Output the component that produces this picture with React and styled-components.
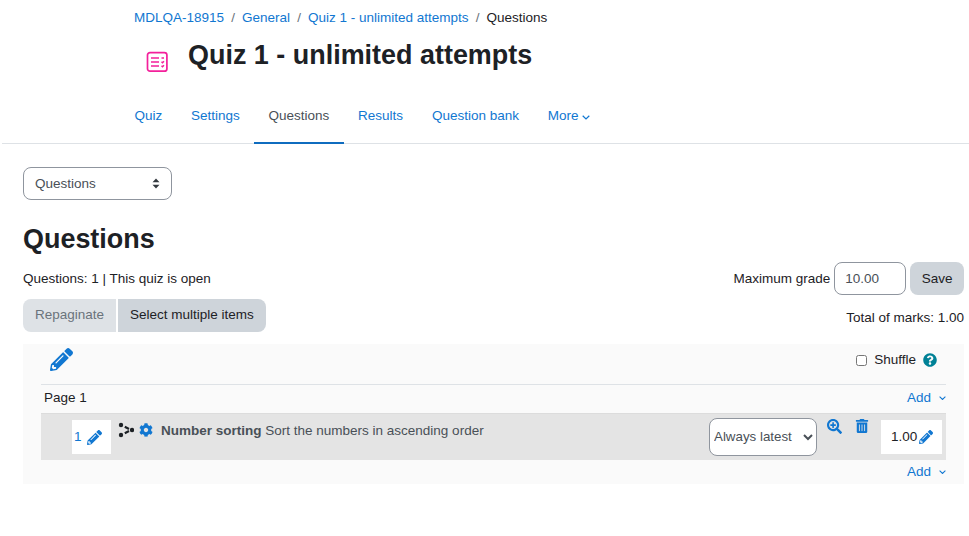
import React from "react";
import styled, { createGlobalStyle } from "styled-components";
import { FaPencilAlt, FaCog, FaTrashAlt, FaSearchPlus, FaQuestionCircle } from "react-icons/fa";

const Global = createGlobalStyle`
  html, body { margin: 0; padding: 0; background: #fff; }
  body { font-family: "Liberation Sans", Arial, sans-serif; font-size: 13.5px; color: #1d2125; line-height: 20px; }
  * { box-sizing: border-box; }
`;
const Page = styled.div`width: 969px; height: 536px; overflow: hidden;`;
const Header = styled.header`padding: 8px 0 0 134px;`;
const Crumbs = styled.nav`display: flex; height: 20px; align-items: center;`;
const Link = styled.a`color: #1177d1; text-decoration: none;`;
const Sep = styled.span`color: #6a737b; padding: 0 7.1px;`;
const Current = styled.span`color: #1d2125;`;
const TitleRow = styled.div`display: flex; align-items: flex-start; height: 52px; margin-top: 7px;`;
const QuizIcon = styled.div`width: 24px; height: 24px; margin: 15px 0 0 11px; color: #f3209b; flex: none; display: flex;`;
const Title = styled.h1`margin: 0 0 0 19px; font-size: 26.95px; line-height: 40px; font-weight: 700; color: #1d2125;`;
const TabBar = styled.div`margin: 16px 0 0 2px; border-bottom: 1px solid #dee2e6; padding-left: 118px; display: flex; height: 41px;`;
const Tab = styled.a`
  padding: 3px 14.4px 0; display: flex; align-items: flex-start; gap: 4px; height: 41px; text-decoration: none;
  color: ${p => p.$active ? "#495057" : "#1177d1"};
  border-bottom: 2px solid ${p => p.$active ? "#0f6cbf" : "transparent"};
`;
const TabChevron = styled.span`display: flex; height: 20px; align-items: center; margin-top: 1px;`;
const Main = styled.main`padding: 23px 5px 0 23px;`;
const FakeSelect = styled.div`
  width: 149px; height: 33px; border: 1px solid #8f959e; border-radius: 8px; display: flex; align-items: center;
  justify-content: space-between; padding: 0 11px; color: #495057;
`;
const H2 = styled.h2`margin: 22px 0 0; font-size: 26.95px; line-height: 34px; font-weight: 700; color: #1d2125;`;
const InfoRow = styled.div`display: flex; justify-content: space-between; align-items: center; height: 33px; margin-top: 6px;`;
const Grade = styled.div`display: flex; align-items: center;`;
const GradeInput = styled.div`
  width: 72px; height: 33px; border: 1px solid #8f959e; border-radius: 8px; margin: 0 4px; padding: 0 10px;
  display: flex; align-items: center; color: #495057;
`;
const Button = styled.button`
  font: inherit; border: 0; height: 33px; background: #ced4da; color: #1d2125; padding: 0 11.5px;
  border-radius: 8px;
`;
const GroupButton = styled(Button)`
  padding: 0 12px 2px;
  border-radius: ${p => p.$first ? "8px 0 0 8px" : "0 8px 8px 0"};
  ${p => p.$first && "background: #dee2e6; color: #6a737b;"}
`;
const ActionRow = styled.div`display: flex; justify-content: space-between; height: 33px; margin-top: 4px;`;
const Group = styled.div`display: flex; gap: 2px;`;
const Total = styled.div`align-self: flex-end; line-height: 20px; position: relative; top: -4px;`;
const Panel = styled.section`background: #fafafa; margin-top: 12px; height: 140px; padding: 0 18px;`;
const PanelTop = styled.div`display: flex; justify-content: space-between; height: 41px; border-bottom: 1px solid #dee2e6; padding: 4px 0 0 9px; color: #1177d1;`;
const Shuffle = styled.label`display: flex; align-items: center; height: 22px; margin: 1px 9px 0 0; color: #1d2125; gap: 8px;`;
const Box = styled.input`margin: 0 -1px 0 0; width: 11px; height: 11px;`;
const HelpIcon = styled.span`color: #008196; display: flex; margin-left: -1px;`;
const PageRow = styled.div`display: flex; justify-content: space-between; height: 28px; align-items: flex-start; padding: 3px 0 0 3px;`;
const AddLink = styled.a`color: #1177d1; display: flex; align-items: center; gap: 8px; text-decoration: none;`;
const QuestionRow = styled.div`
  background: #e4e4e4; border-top: 1px solid #dcdcdc; height: 47px; display: flex; align-items: flex-start; padding: 6px 4px 0 31px;
`;
const Num = styled.div`
  width: 39px; height: 34px; background: #fff; display: flex; align-items: center; gap: 5px; padding-left: 2px; color: #1177d1;
`;
const RandomIcon = styled.svg`margin: 2px 0 0 7px; flex: none; color: #1d2125;`;
const Cog = styled.span`display: flex; color: #1177d1; margin: 3px 0 0 5px;`;
const QName = styled.div`margin: 1px 0 0 8px; color: #495057; flex: 1; line-height: 20px;`;
const Behaviour = styled.select`
  font-family: inherit; font-size: 13.33px; width: 108px; height: 38px; border: 1px solid #8f959e; border-radius: 8px; background: #fff; color: #495057;
  padding: 0 0 2px; margin-top: -2px;
`;
const IconBtn = styled.span`display: flex; color: #1177d1; margin-left: ${p => p.$ml}px; margin-top: -1px;`;
const Mark = styled.div`
  width: 61px; height: 34px; background: #fff; margin-left: 12px; display: flex; align-items: center; padding-left: 10px; gap: 2px; color: #1d2125;
`;
const Foot = styled.div`display: flex; justify-content: flex-end; height: 23px; align-items: flex-start; padding-top: 2px;`;
const Chevron = ({ size = 7 }) => (
  <svg width={size} height={size * 0.625} viewBox="0 0 8 5" fill="none" stroke="currentColor" strokeWidth="1.2"><path d="M.7.8 4 4 7.3.8" /></svg>
);

export default function App() {
  return (
    <Page>
      <Global />
      <Header>
        <Crumbs>
          <Link>MDLQA-18915</Link><Sep>/</Sep>
          <Link>General</Link><Sep>/</Sep>
          <Link>Quiz 1 - unlimited attempts</Link><Sep>/</Sep>
          <Current>Questions</Current>
        </Crumbs>
        <TitleRow>
          <QuizIcon>
            <svg width="24" height="24" viewBox="0 0 24 24" fill="none" stroke="currentColor" strokeWidth="1.7">
              <rect x="2.5" y="2.6" width="19.4" height="18.6" rx="2.5" />
              <path d="M6 8h8M6 12h8M6 16h8" strokeWidth="1.4" />
              <path d="M16.5 8h2.5M16.5 11.8l1 1 1.5-1.5M16.5 15.8l1 1 1.5-1.5" strokeWidth="1.4" />
            </svg>
          </QuizIcon>
          <Title>Quiz 1 - unlimited attempts</Title>
        </TitleRow>
      </Header>
      <TabBar>
        <Tab>Quiz</Tab>
        <Tab>Settings</Tab>
        <Tab $active>Questions</Tab>
        <Tab>Results</Tab>
        <Tab>Question bank</Tab>
        <Tab>More <TabChevron><Chevron size={8} /></TabChevron></Tab>
      </TabBar>
      <Main>
        <FakeSelect>
          Questions
          <svg width="8" height="11" viewBox="0 0 8 11" fill="#343a40"><path d="M4 .5 7.5 4.2H.5zM4 10.5.5 6.8h7z" /></svg>
        </FakeSelect>
        <H2>Questions</H2>
        <InfoRow>
          <span>Questions: 1 | This quiz is open</span>
          <Grade>
            Maximum grade
            <GradeInput>10.00</GradeInput>
            <Button>Save</Button>
          </Grade>
        </InfoRow>
        <ActionRow>
          <Group>
            <GroupButton $first>Repaginate</GroupButton>
            <GroupButton>Select multiple items</GroupButton>
          </Group>
          <Total>Total of marks: 1.00</Total>
        </ActionRow>
        <Panel>
          <PanelTop>
            <FaPencilAlt size={23} />
            <Shuffle>
              <Box type="checkbox" />
              Shuffle
              <HelpIcon><FaQuestionCircle size={14} /></HelpIcon>
            </Shuffle>
          </PanelTop>
          <PageRow>
            <span>Page 1</span>
            <AddLink>Add <Chevron /></AddLink>
          </PageRow>
          <QuestionRow>
            <Num>1 <FaPencilAlt size={15} /></Num>
            <RandomIcon width="16" height="16" viewBox="0 0 16 16" fill="currentColor" stroke="currentColor">
              <circle cx="3" cy="3" r="2.2" stroke="none" />
              <circle cx="3" cy="13" r="2.2" stroke="none" />
              <circle cx="14" cy="8" r="2.2" stroke="none" />
              <path d="M6.8 4.8 11 7M6.8 11.2 11 9" strokeWidth="2.2" fill="none" />
            </RandomIcon>
            <Cog><FaCog size={14} /></Cog>
            <QName><b>Number sorting</b> Sort the numbers in ascending order</QName>
            <Behaviour defaultValue="l">
              <option value="l">Always latest</option>
            </Behaviour>
            <IconBtn $ml={10}><FaSearchPlus size={15} /></IconBtn>
            <IconBtn $ml={13}><FaTrashAlt size={14} /></IconBtn>
            <Mark>1.00 <FaPencilAlt size={14} color="#1177d1" /></Mark>
          </QuestionRow>
          <Foot>
            <AddLink>Add <Chevron /></AddLink>
          </Foot>
        </Panel>
      </Main>
    </Page>
  );
}
